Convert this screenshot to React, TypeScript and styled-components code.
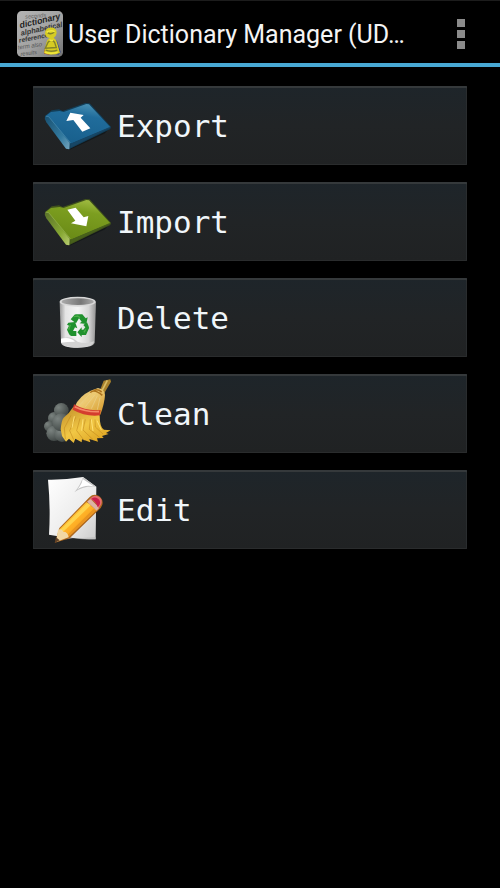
import React from "react";
import styled, { createGlobalStyle } from "styled-components";

const GlobalStyle = createGlobalStyle`
  *, *::before, *::after { box-sizing: border-box; }
  html, body { margin: 0; min-height: 100%; background: #000; }
`;

const Screen = styled.div`
  min-height: 100vh;
  background: #000;
  color: #f2f6f8;
`;

const ActionBar = styled.header`
  display: flex;
  align-items: center;
  gap: 5px;
  height: 67px;
  padding: 0 27px 0 17px;
  border-top: 1px solid #1c1c1c;
  border-bottom: 4px solid #48a8d4;
`;

const AppLogo = styled.svg`
  flex: none;
  width: 46px;
  height: 46px;
  margin-top: 4px;
`;

const Title = styled.h1`
  flex: 1;
  min-width: 0;
  margin: 6px 0 0;
  overflow: hidden;
  white-space: nowrap;
  font: 400 25px/32px Roboto, sans-serif;
  color: #f4f4f4;
`;

const MenuButton = styled.button`
  display: flex;
  flex: none;
  flex-direction: column;
  align-items: center;
  justify-content: center;
  gap: 3px;
  width: 24px;
  height: 48px;
  margin-top: 4px;
  padding: 0;
  border: 0;
  background: transparent;
  cursor: pointer;
`;

const MenuDot = styled.span`
  width: 8px;
  height: 8px;
  background: #8b8b8b;
`;

const Actions = styled.main`
  display: flex;
  flex-direction: column;
  gap: 17px;
  padding: 19px 33px;
`;

const ActionButton = styled.button`
  display: flex;
  align-items: center;
  gap: 4px;
  height: 79px;
  padding: 0 8px;
  border: 0;
  border-radius: 1px;
  background: linear-gradient(#1e252a, #212426 50%, #202223);
  box-shadow: inset 0 2px 0 #35393b, inset 0 -1px 0 #2a2c2d, inset -1px 0 0 #292c2e, inset 1px 0 0 #24282a;
  color: #f0f6fa;
  font: 400 31px/36px "DejaVu Sans Mono", monospace;
  text-align: left;
  cursor: pointer;
`;

const ActionIcon = styled.svg`
  flex: none;
  width: 72px;
  height: 78px;
`;

const LogoIcon = () => (
  <AppLogo viewBox="51 33 138 136" preserveAspectRatio="none" aria-hidden="true">
    <defs>
      <linearGradient id="paper" x1="0" y1="0" x2="1" y2="1">
        <stop offset="0" stopColor="#b4b4b4" />
        <stop offset=".55" stopColor="#a2a2a2" />
        <stop offset="1" stopColor="#707070" />
      </linearGradient>
      <clipPath id="logoClip"><rect x="51" y="33" width="138" height="136" rx="14" /></clipPath>
    </defs>
    <g clipPath="url(#logoClip)">
      <rect x="51" y="33" width="138" height="136" fill="url(#paper)" />
      <g fontFamily="Liberation Sans, sans-serif" fontStyle="italic" fill="#333">
        <text transform="translate(76 56) rotate(-5)" fontSize="17" fill="#666">seconds</text>
        <text transform="translate(61 84) rotate(-13)" fontSize="26" fontWeight="700" fill="#222">dictionary</text>
        <text transform="translate(64 106) rotate(-12)" fontSize="22" fontWeight="700">alphabetical</text>
        <text transform="translate(58 127) rotate(-11)" fontSize="20" fontWeight="700">reference</text>
        <text transform="translate(54 147) rotate(-8)" fontSize="18" fill="#555">term also</text>
        <text transform="translate(62 166) rotate(-7)" fontSize="17" fill="#555">results</text>
      </g>
      <path d="M133 150l9-22 6 34-16-3z" fill="#ad3327" />
      <path d="M170 119l12 35-6 8-10-2z" fill="#30438e" />
      <path d="M135 100q0-18 18-18 17 0 17 16-2 11-9 14 8 5 11 17l8 28q-25 9-48 0l7-30q2-10 10-14-13-3-14-13z" fill="#d6cc23" />
      <path d="M143 97q9 7 20-2M144 126q10-13 20 0l5 15-33 2zM137 149q15 6 35 0" fill="none" stroke="#82822b" strokeWidth="4" />
      <path d="M140 96q12-8 24-2M148 119l12 1M135 155q17 6 38 0" fill="none" stroke="#f1e83d" strokeWidth="5" />
    </g>
  </AppLogo>
);

const FolderIcon = ({ kind }: { kind: "export" | "import" }) => {
  const out = kind === "export";
  return (
    <ActionIcon viewBox="33 18 216 234" aria-hidden="true">
      <defs>
        <linearGradient id={`${kind}Face`} x1=".7" y1="0" x2=".4" y2="1">
          <stop offset="0" stopColor={out ? "#4a91b4" : "#a1bc43"} />
          <stop offset=".3" stopColor={out ? "#206c9b" : "#7c9e20"} />
          <stop offset="1" stopColor={out ? "#185f8c" : "#6a8a16"} />
        </linearGradient>
        <linearGradient id={`${kind}Edge`} x1="0" y1="0" x2="1" y2="1">
          <stop offset="0" stopColor={out ? "#174f70" : "#59702a"} />
          <stop offset=".65" stopColor={out ? "#347ba0" : "#87a833"} />
          <stop offset="1" stopColor={out ? "#75a5bd" : "#b8cc72"} />
        </linearGradient>
      </defs>
      <path d="M124 194L238 142 225 157 118 207z" fill="#14181a" />
      <path d="M45 105L65 88l22-3 11 5 68-24 13 1 64 70-2 7-124 61-8-1z" fill={out ? "#123e58" : "#40521b"} />
      <path d="M46 106l17-13 26-3 12 3 68-24 8 1 64 69-119 49z" fill={`url(#${kind}Face)`} />
      <path d="M45 105q6-2 12 3l62 77-1 20-10-2-59-79q-7-10-4-19z" fill={`url(#${kind}Edge)`} />
      <path d="M48 106l8 1 65 78" fill="none" stroke={out ? "#4c8eb0" : "#97b552"} strokeWidth="2" />
      <path d="M121 188l120-51-3 5-117 58z" fill={out ? "#174665" : "#48611b"} />
      <path
        d={out
          ? "M121 95l40 7-9 8 29 32-24 10-27-35-21 3z"
          : "M112 98l25-6 24 29 14-4-6 31-46-9 13-8z"}
        fill="#fff"
      />
    </ActionIcon>
  );
};

const BinIcon = () => (
  <ActionIcon viewBox="33 18 216 234" aria-hidden="true">
    <defs>
      <linearGradient id="bin">
        <stop offset="0" stopColor="#999" />
        <stop offset=".16" stopColor="#e4e4e4" />
        <stop offset=".5" stopColor="#f4f4f4" />
        <stop offset=".8" stopColor="#d6d6d6" />
        <stop offset="1" stopColor="#929292" />
      </linearGradient>
      <linearGradient id="binMouth">
        <stop offset="0" stopColor="#aaa" />
        <stop offset=".6" stopColor="#777" />
        <stop offset="1" stopColor="#aaa" />
      </linearGradient>
    </defs>
    <path d="M89 86l4 123q3 15 50 15 49 0 51-16l4-122z" fill="url(#bin)" />
    <ellipse cx="143" cy="86" rx="54" ry="15" fill="#d8d8d8" />
    <ellipse cx="143" cy="86" rx="48" ry="10" fill="url(#binMouth)" />
    <path d="M93 198q24-14 50 8 23 8 49-1-3 18-49 18t-50-18z" fill="#d2d2d2" />
    <path d="M93 197q26-7 42 9-25 0-42 3z" fill="#fff" />
    <g fill="#20912e">
      <path d="M122 139l9-11q3-4 8-4h18l10 12 6-3-4 20-20-2 6-5-8-10-9 15z" />
      <path d="M115 149l20-2 7 19-7-3-6 11h10v15h-15q-5-1-7-6l-6-13 6-12-6-3z" />
      <path d="M160 156l11-8 5 12q3 5-1 10l-7 16h-13v6l-13-14 13-15v7h5l6-7z" />
    </g>
    <path d="M131 131l12-2 7 5M121 155l-5 15M162 178l5-9" stroke="#4aae48" strokeWidth="4" fill="none" />
  </ActionIcon>
);

const BroomIcon = () => (
  <ActionIcon viewBox="33 18 216 234" aria-hidden="true">
    <defs>
      <linearGradient id="broom" x1="0" y1="0" x2="1" y2="1">
        <stop offset="0" stopColor="#ddb966" />
        <stop offset=".45" stopColor="#edca73" />
        <stop offset="1" stopColor="#d49522" />
      </linearGradient>
      <linearGradient id="bristles" x1="0" y1="0" x2=".8" y2="1">
        <stop offset="0" stopColor="#bf8b28" />
        <stop offset=".55" stopColor="#f1c745" />
        <stop offset="1" stopColor="#dda321" />
      </linearGradient>
      <radialGradient id="dust" cx=".3" cy=".3" r=".7">
        <stop offset="0" stopColor="#7b8380" />
        <stop offset="1" stopColor="#444b49" />
      </radialGradient>
    </defs>
    <g fill="url(#dust)">
      <circle cx="73" cy="148" r="19" />
      <circle cx="94" cy="124" r="22" />
      <circle cx="58" cy="172" r="16" />
      <circle cx="72" cy="193" r="23" />
      <circle cx="96" cy="197" r="22" />
      <circle cx="94" cy="160" r="27" />
    </g>
    <path d="M209 66l12-31 20-4 2 7-22 38z" fill="#a9822d" />
    <path d="M215 67l17-33" stroke="#d8bd66" strokeWidth="5" />
    <path d="M134 113q13-32 48-48l22-8q20 4 21 20-1 25-14 60l-81-7z" fill="url(#broom)" />
    <path d="M181 71q11-13 36 8M191 65q11-7 24 4" stroke="#ad731e" strokeWidth="5" fill="none" />
    <path d="M149 108l35-37M166 113l28-35M184 119l18-39M202 122l8-36" stroke="#ead28c" strokeWidth="2" fill="none" />
    <path d="M130 113q-13 21-29 33-7 9-9 35l4 20 12 17 9-9 14 13 5-13 19 11 1-9 25 9-3-10 26 8-3-10 20-1-5-6 20-6-8-3 14-8-20-2q-13-5-13-43z" fill="url(#bristles)" />
    <path d="M123 139l-20 38 3 33M137 145l-18 40 12 27M150 148l-10 37 23 30M166 151l-7 32 30 29M181 150l-3 31 31 24M195 151l1 23 23 21" stroke="#bf861e" strokeWidth="3" fill="none" opacity=".55" />
    <path d="M133 142l-7 34M159 151l-4 34M184 151l5 35M201 155l13 28" stroke="#ffe175" strokeWidth="3" fill="none" />
    <path d="M132 106q39 22 80 17l-2 16q-43 5-82-17z" fill="#d43d2e" />
    <path d="M134 113q35 17 73 15" stroke="#f48867" strokeWidth="5" fill="none" />
  </ActionIcon>
);

const EditIcon = () => (
  <ActionIcon viewBox="33 18 216 234" aria-hidden="true">
    <defs>
      <linearGradient id="sheet" x1="0" y1="0" x2="1" y2="1">
        <stop offset="0" stopColor="#fff" />
        <stop offset=".6" stopColor="#ececec" />
        <stop offset="1" stopColor="#ccc" />
      </linearGradient>
      <linearGradient id="pencil" x1="0" y1="0" x2="1" y2="1">
        <stop offset="0" stopColor="#ffe05a" />
        <stop offset=".5" stopColor="#ffb126" />
        <stop offset="1" stopColor="#e88413" />
      </linearGradient>
    </defs>
    <path d="M54 44q50 1 105-8l40 29-2 158q-67-1-140-14 5-80-3-165z" fill="url(#sheet)" />
    <path d="M159 36q-8 25-26 46 26-20 66-17z" fill="#c4c4c4" />
    <path d="M158 42q-2 16-16 31 22-15 49-9z" fill="#fff" />
    <path d="M93 213l15 10 89-7v7q-55 2-108-7z" fill="#bbb" opacity=".7" />
    <path d="M75 233l13-44 91-93q12-12 28-3 14 11 10 26-3 9-11 16l-87 85z" fill="#ad671e" />
    <path d="M88 193l81-82 31 25-84 79z" fill="url(#pencil)" />
    <path d="M91 194l82-81 9 8-84 81z" fill="#ffd44d" />
    <path d="M108 214l82-82 9 4-83 80z" fill="#e99420" />
    <path d="M84 194q11-4 16 6 14 0 16 17l-38 14z" fill="#f2d8a4" />
    <path d="M78 217l11 9-15 8z" fill="#604126" />
    <path d="M171 110l10-9 27 27-8 9z" fill="#ddb4a5" />
    <path d="M179 102l7-6q13-8 23 1 10 9 4 22l-8 11q-4-20-26-28z" fill="#e66c70" />
    <path d="M184 101q13-8 22 2 8 9 1 19l-4 4q-5-16-19-25z" fill="#cb204c" />
  </ActionIcon>
);

const actions = [
  { label: "Export", icon: <FolderIcon kind="export" /> },
  { label: "Import", icon: <FolderIcon kind="import" /> },
  { label: "Delete", icon: <BinIcon /> },
  { label: "Clean", icon: <BroomIcon /> },
  { label: "Edit", icon: <EditIcon /> },
];

export default function App() {
  return (
    <>
      <GlobalStyle />
      <Screen>
        <ActionBar>
          <LogoIcon />
          <Title>User Dictionary Manager (UD…</Title>
          <MenuButton type="button" aria-label="More options">
            <MenuDot />
            <MenuDot />
            <MenuDot />
          </MenuButton>
        </ActionBar>
        <Actions>
          {actions.map(({ label, icon }) => (
            <ActionButton key={label} type="button">
              {icon}
              <span>{label}</span>
            </ActionButton>
          ))}
        </Actions>
      </Screen>
    </>
  );
}
